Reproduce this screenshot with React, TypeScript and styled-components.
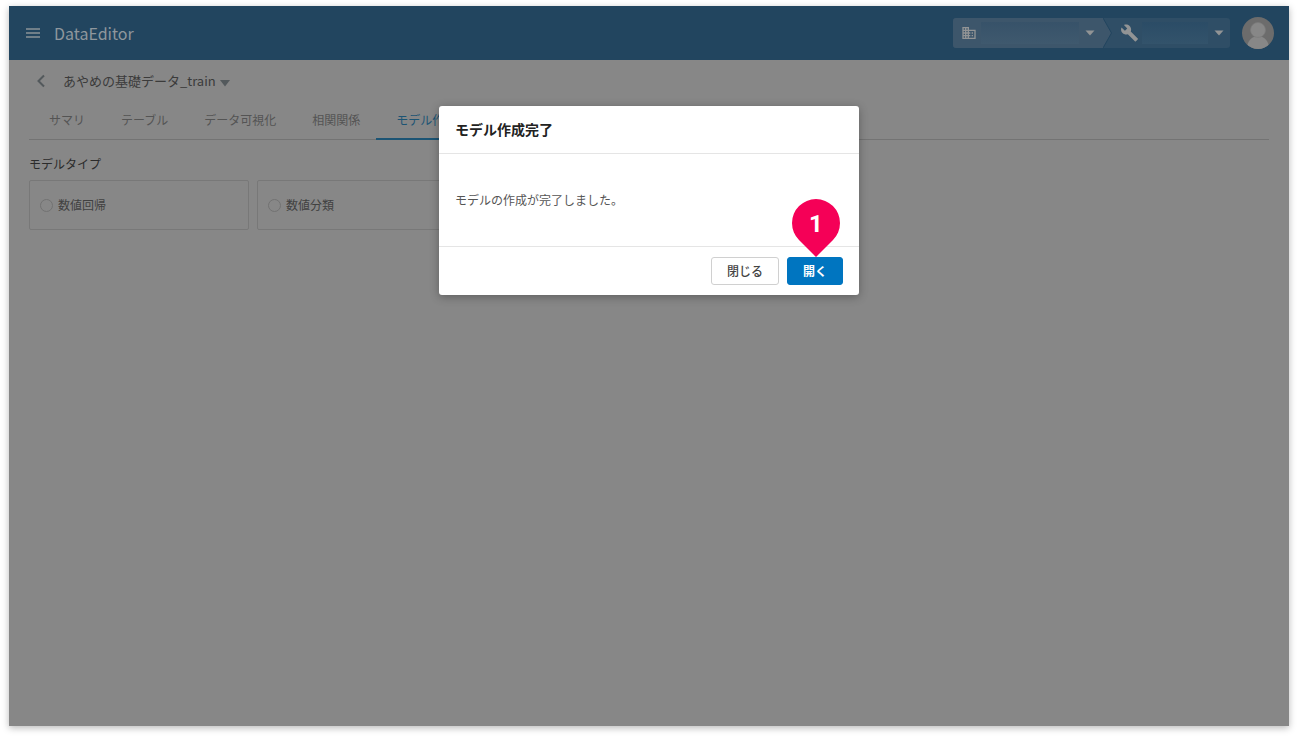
import React from 'react';
import styled, { createGlobalStyle } from 'styled-components';

const Global = createGlobalStyle`
  * { box-sizing: border-box; }
  body {
    margin: 0;
    background: #fff;
    color: #333;
    font: 12px/20px "Noto Sans CJK JP", "Noto Sans", sans-serif;
  }
  button, input, h1, h2, p { font: inherit; margin: 0; }
  button { cursor: pointer; }
`;

const Frame = styled.div`
  position: relative;
  padding: 6px 9px 12px;
  height: 100vh;
  min-height: 320px;
`;

const Screen = styled.div`
  height: 100%;
  background: #878787;
  box-shadow: 0 2px 7px rgba(0, 0, 0, 0.28);
`;

const Header = styled.header`
  display: flex;
  align-items: center;
  height: 54px;
  padding: 0 15px 0 16px;
  background: #22455f;
`;

const IconButton = styled.button`
  display: flex;
  align-items: center;
  justify-content: center;
  padding: 0;
  border: 0;
  background: none;
  color: #8b9298;
`;

const Brand = styled.h1`
  flex: 1;
  padding-left: 13px;
  color: #8f979d;
  font-size: 16px;
  font-weight: 400;
  line-height: 24px;
`;

const Switcher = styled.div`
  display: flex;
  height: 30px;
  margin-right: 12px;
  border-radius: 3px;
  overflow: hidden;
  background: #2f4e66;
`;

const Segment = styled.button<{ $lead?: boolean }>`
  display: flex;
  align-items: center;
  gap: 4px;
  width: ${(p) => (p.$lead ? 150 : 118)}px;
  padding: 0 ${(p) => (p.$lead ? 8 : 6)}px;
  border: 0;
  background: ${(p) => (p.$lead ? '#3d566b' : 'none')};
  color: #929495;
`;

const Masked = styled.span<{ $lead?: boolean }>`
  flex: 1;
  height: 22px;
  margin-right: 2px;
  background: ${(p) =>
    p.$lead
      ? 'linear-gradient(#375269, #3f596e)'
      : 'linear-gradient(#2b4c66, #33536b)'};
`;

const Avatar = styled.button`
  width: 32px;
  height: 32px;
  padding: 0;
  border: 0;
  border-radius: 50%;
  overflow: hidden;
  background: #6c6c6c;
`;

const Main = styled.main`
  padding: 9px 20px;
`;

const TitleRow = styled.div`
  display: flex;
  align-items: center;
  height: 24px;
  padding-left: 7px;
`;

const FileButton = styled.button`
  display: flex;
  align-items: center;
  gap: 4px;
  margin-left: 17px;
  padding: 0;
  border: 0;
  background: none;
  color: #3b3b3b;
  font-size: 13px;
`;

const Tabs = styled.nav`
  display: flex;
  height: 47px;
  padding-left: 2px;
  border-bottom: 1px solid #737373;
`;

const Tab = styled.a<{ $active?: boolean }>`
  height: 47px;
  margin-left: ${(p) => (p.$active ? -2 : 0)}px;
  padding: 17px 18px 0 ${(p) => (p.$active ? 20 : 18)}px;
  color: ${(p) => (p.$active ? '#1c5474' : '#545454')};
  border-bottom: ${(p) => (p.$active ? '2px solid #1c5474' : '0')};
  text-decoration: none;
`;

const Group = styled.fieldset`
  margin: 0;
  padding: 14px 0 0;
  border: 0;
`;

const Legend = styled.legend`
  float: left;
  width: 100%;
  padding: 0;
  margin-bottom: 6px;
  color: #2b2b2b;
`;

const Options = styled.div`
  clear: both;
  display: flex;
  gap: 8px;
`;

const Option = styled.label`
  display: flex;
  align-items: center;
  gap: 5px;
  width: 220px;
  height: 50px;
  padding: 0 10px;
  border: 1px solid #787878;
  border-radius: 2px;
  color: #414141;
`;

const Radio = styled.input`
  appearance: none;
  width: 13px;
  height: 13px;
  border: 1px solid #727272;
  border-radius: 50%;
`;

const DialogLayer = styled.div`
  position: absolute;
  inset: 6px 9px 12px;
  display: flex;
  justify-content: center;
  align-items: flex-start;
  padding-top: 100px;
`;

const Dialog = styled.section`
  width: 420px;
  border-radius: 3px;
  background: #fff;
  box-shadow: 0 2px 10px rgba(0, 0, 0, 0.3);
`;

const DialogTitle = styled.h2`
  padding: 11px 16px 12px;
  border-bottom: 1px solid #e5e5e5;
  color: #222;
  font-size: 14px;
  font-weight: 700;
  line-height: 24px;
`;

const DialogText = styled.p`
  padding: 36px 16px;
  color: #555;
`;

const Actions = styled.footer`
  display: flex;
  justify-content: flex-end;
  gap: 8px;
  padding: 10px 16px;
  border-top: 1px solid #e5e5e5;
`;

const Action = styled.button<{ $primary?: boolean }>`
  position: relative;
  height: 28px;
  padding: 0 15px;
  border: 1px solid ${(p) => (p.$primary ? '#0075c0' : '#d0d0d0')};
  border-radius: 3px;
  background: ${(p) => (p.$primary ? '#0075c0' : '#fff')};
  color: ${(p) => (p.$primary ? '#fff' : '#444')};
  font-weight: ${(p) => (p.$primary ? 700 : 500)};
`;

const Marker = styled.span`
  position: absolute;
  left: 4px;
  bottom: 27px;
  z-index: 1;
  width: 48px;
  height: 58px;
  color: #fff;
  font: 700 24px/50px Roboto, sans-serif;
  text-align: center;
`;

const MarkerShape = styled.svg`
  position: absolute;
  inset: 0;
  z-index: -1;
`;

const Caret = () => (
  <svg width="10" height="6" viewBox="0 0 10 6" aria-hidden="true">
    <path d="M0.500 0.500H9.500L5 5.500Z" fill="currentColor" />
  </svg>
);

const tabs = ['サマリ', 'テーブル', 'データ可視化', '相関関係', 'モデル作成'];
const types = ['数値回帰', '数値分類'];

export default function App() {
  return (
    <>
      <Global />
      <Frame>
        <Screen>
          <Header>
            <IconButton aria-label="メニュー">
              <svg width="16" height="16" viewBox="0 0 16 16">
                <path d="M1 4H15M1 8H15M1 12H15" stroke="currentColor" strokeWidth="1.600" />
              </svg>
            </IconButton>
            <Brand>DataEditor</Brand>
            <Switcher>
              <Segment $lead aria-label="組織">
                <svg width="16" height="16" viewBox="0 0 24 24">
                  <path fill="currentColor" d="M12 7V3H2v18h20V7H12zM6 19H4v-2h2v2zm0-4H4v-2h2v2zm0-4H4V9h2v2zm0-4H4V5h2v2zm4 12H8v-2h2v2zm0-4H8v-2h2v2zm0-4H8V9h2v2zm0-4H8V5h2v2zm10 12h-8v-2h2v-2h-2v-2h2v-2h-2V9h8v10zm-2-8h-2v2h2v-2zm0 4h-2v2h2v-2z" />
                </svg>
                <Masked $lead />
                <Caret />
              </Segment>
              <svg width="9" height="30" viewBox="0 0 9 30" aria-hidden="true">
                <path d="M0 0L8.500 15L0 30Z" fill="#3d566b" />
                <path d="M0 0L8.500 15L0 30" fill="none" stroke="#22455f" />
              </svg>
              <Segment aria-label="プロジェクト">
                <svg width="20" height="20" viewBox="-3 -1 26 26">
                  <path fill="currentColor" d="M22.700 19l-9.100-9.100c.9-2.300.4-5-1.500-6.900-2-2-5-2.400-7.400-1.300L9 6 6 9 1.600 4.700C.4 7.100.9 10.100 2.900 12.100c1.900 1.900 4.600 2.400 6.900 1.500l9.100 9.100c.4.4 1 .4 1.400 0l2.300-2.300c.5-.4.5-1.100.1-1.400z" />
                </svg>
                <Masked />
                <Caret />
              </Segment>
            </Switcher>
            <Avatar aria-label="アカウント">
              <svg width="32" height="32" viewBox="0 0 32 32">
                <circle cx="16" cy="13" r="7.500" fill="#878787" />
                <path d="M5 32C5 24 10 19 16 19S27 24 27 32Z" fill="#878787" />
                <circle cx="16" cy="13" r="7.500" fill="none" stroke="#7b7b7b" strokeWidth="0.700" />
              </svg>
            </Avatar>
          </Header>
          <Main>
            <TitleRow>
              <IconButton aria-label="戻る">
                <svg width="10" height="14" viewBox="0 0 10 14">
                  <path d="M8 1.500L2.500 7L8 12.500" fill="none" stroke="#53595c" strokeWidth="2" />
                </svg>
              </IconButton>
              <FileButton>
                あやめの基礎データ_train
                <svg width="10" height="12" viewBox="0 0 10 12" aria-hidden="true">
                  <path d="M0 5H10L5 11.500Z" fill="#53595c" />
                </svg>
              </FileButton>
            </TitleRow>
            <Tabs>
              {tabs.map((t) => (
                <Tab key={t} href="#" $active={t === 'モデル作成'}>{t}</Tab>
              ))}
            </Tabs>
            <Group>
              <Legend>モデルタイプ</Legend>
              <Options>
                {types.map((t) => (
                  <Option key={t}>
                    <Radio type="radio" name="type" />
                    {t}
                  </Option>
                ))}
              </Options>
            </Group>
          </Main>
        </Screen>
        <DialogLayer>
          <Dialog role="dialog" aria-labelledby="dialog-title">
            <DialogTitle id="dialog-title">モデル作成完了</DialogTitle>
            <DialogText>モデルの作成が完了しました。</DialogText>
            <Actions>
              <Action>閉じる</Action>
              <Action $primary>
                開く
                <Marker>
                  <MarkerShape width="48" height="58" viewBox="0 0 48 58">
                    <path d="M24 58L7 41A24 24 0 1 1 41 41Z" fill="#f50057" />
                  </MarkerShape>
                  1
                </Marker>
              </Action>
            </Actions>
          </Dialog>
        </DialogLayer>
      </Frame>
    </>
  );
}
